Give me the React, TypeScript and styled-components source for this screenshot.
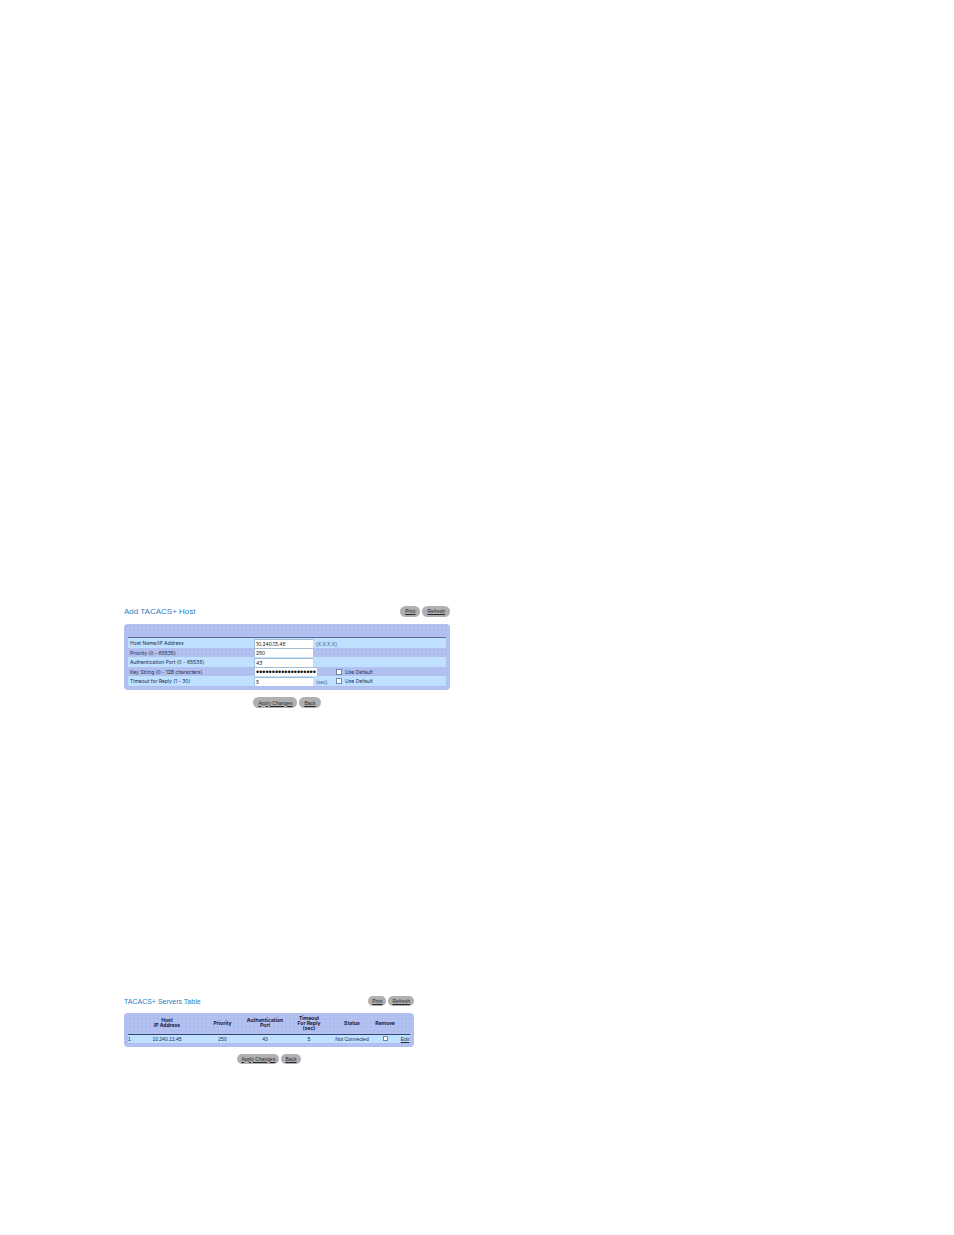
import React from "react";
import styled, { createGlobalStyle } from "styled-components";

const GlobalStyle = createGlobalStyle`
  *, *::before, *::after { box-sizing: border-box; }
  body {
    margin: 0;
    background: #fff;
    color: #1c2c4c;
    font-family: "Liberation Sans", Arial, sans-serif;
    font-size: 5px;
    line-height: 8px;
  }
`;

const Page = styled.main`
  padding: 605px 16px 172px 124px;
`;

const Section = styled.form<{ $width: number; $after?: number }>`
  max-width: ${(p) => p.$width}px;
  margin-bottom: ${(p) => p.$after ?? 0}px;
`;

const TitleBar = styled.header<{ $gap: number }>`
  display: flex;
  align-items: center;
  justify-content: space-between;
  margin-bottom: ${(p) => p.$gap}px;
`;

const Title = styled.h2<{ $size: number }>`
  margin: 0;
  padding-top: 2px;
  color: #2a7cc4;
  font-size: ${(p) => p.$size}px;
  font-weight: 400;
  line-height: 10px;
`;

const Buttons = styled.div<{ $centered?: boolean }>`
  display: flex;
  gap: 2px;
  justify-content: ${(p) => (p.$centered ? "center" : "flex-end")};
`;

const PillButton = styled.button<{ $tall?: boolean }>`
  height: ${(p) => (p.$tall ? 11 : 10)}px;
  padding: 0 ${(p) => (p.$tall ? 5 : 4)}px;
  border: 0;
  border-radius: 6px;
  background: #b0b0b0;
  color: #26262c;
  font: inherit;
  line-height: 10px;
  text-decoration: underline;
`;

const Panel = styled.div<{ $top: number }>`
  margin-bottom: 7px;
  padding: ${(p) => p.$top}px 4px 4px;
  border-radius: 4px;
  background-color: #b3c1f1;
  background-image: radial-gradient(#adbaec 1px, transparent 1px);
  background-size: 4px 4px;
`;

const Fields = styled.div`
  border-top: 1px solid #5a6c9c;
  font-family: Inter, "Liberation Sans", sans-serif;
`;

const Field = styled.div`
  display: grid;
  grid-template-columns: 126px 59px 23px 1fr;
  align-items: center;
  height: 9px;

  &:nth-child(odd) {
    height: 10px;
    background: #bfe0ff;
  }
`;

const FieldLabel = styled.label`
  padding-left: 2px;
`;

const TextBox = styled.input<{ $wide?: boolean }>`
  width: ${(p) => (p.$wide ? 63 : 59)}px;
  height: 9px;
  padding: 0 1px;
  border: 0 solid #a4bcd4;
  border-width: 1px 0 0 1px;
  background: #fff;
  color: #111;
  font: inherit;
  font-family: ${(p) => (p.$wide ? '"Liberation Sans", sans-serif' : "inherit")};
  font-size: ${(p) => (p.$wide ? 9 : 5)}px;
  line-height: 8px;
  outline: 0;
`;

const Hint = styled.span`
  padding: 1px 0 0 3px;
  color: #3c5c8c;
  font-family: "Liberation Sans", sans-serif;
`;

const CheckLabel = styled.label`
  display: flex;
  align-items: center;
  gap: 3px;
`;

const Check = styled.input`
  appearance: none;
  display: block;
  width: 6px;
  height: 6px;
  margin: 0;
  border: 1px solid #7088a8;
  background: #fff;
`;

const Servers = styled.table`
  width: 100%;
  border-collapse: collapse;
  table-layout: fixed;
  text-align: center;
  white-space: nowrap;

  th {
    height: 21px;
    padding: 0;
    border-bottom: 1px solid #34446c;
    color: #16203c;
    font-family: Inter, "Liberation Sans", sans-serif;
    line-height: 5px;
  }

  td {
    height: 8px;
    padding: 0;
    background: #bfe0ff;
  }

  td:first-child { text-align: left; }

  input { margin: 0 auto; width: 5px; height: 5px; }
`;

const EditLink = styled.a`
  color: #1c2c4c;
`;

type FieldSpec = { id: string; label: string; value: string; secret?: boolean; hint?: string; useDefault?: boolean };

const fields: FieldSpec[] = [
  { id: "host", label: "Host Name/IP Address", value: "10.240.13.45", hint: "(X.X.X.X)" },
  { id: "priority", label: "Priority (0 - 65535)", value: "250" },
  { id: "port", label: "Authentication Port (0 - 65535)", value: "43" },
  { id: "key", label: "Key String (0 - 128 characters)", value: "abcdefghijklmnopqrst", secret: true, useDefault: true },
  { id: "timeout", label: "Timeout for Reply (1 - 30)", value: "5", hint: "(sec)", useDefault: true },
];

const columns = [7, 64, 47, 38, 50, 36, 30, 10];

export default function App() {
  return (
    <>
      <GlobalStyle />
      <Page>
        <Section $width={326} $after={287}>
          <TitleBar $gap={7}>
            <Title $size={8}>Add TACACS+ Host</Title>
            <Buttons>
              <PillButton $tall type="button">Print</PillButton>
              <PillButton $tall type="button">Refresh</PillButton>
            </Buttons>
          </TitleBar>
          <Panel $top={13}>
            <Fields>
              {fields.map((f) => (
                <Field key={f.id}>
                  <FieldLabel htmlFor={f.id}>{f.label}</FieldLabel>
                  <TextBox id={f.id} type={f.secret ? "password" : "text"} $wide={f.secret} defaultValue={f.value} />
                  <Hint>{f.hint}</Hint>
                  {f.useDefault && (
                    <CheckLabel>
                      <Check type="checkbox" />
                      Use Default
                    </CheckLabel>
                  )}
                </Field>
              ))}
            </Fields>
          </Panel>
          <Buttons $centered>
            <PillButton $tall type="button">Apply Changes</PillButton>
            <PillButton $tall type="button">Back</PillButton>
          </Buttons>
        </Section>

        <Section $width={290}>
          <TitleBar $gap={6}>
            <Title $size={7}>TACACS+ Servers Table</Title>
            <Buttons>
              <PillButton type="button">Print</PillButton>
              <PillButton type="button">Refresh</PillButton>
            </Buttons>
          </TitleBar>
          <Panel $top={0}>
            <Servers>
              <colgroup>
                {columns.map((w, i) => (
                  <col key={i} width={w} />
                ))}
              </colgroup>
              <thead>
                <tr>
                  <th />
                  <th>Host<br />IP Address</th>
                  <th>Priority</th>
                  <th>Authentication<br />Port</th>
                  <th>Timeout<br />For Reply<br />(sec)</th>
                  <th>Status</th>
                  <th>Remove</th>
                  <th />
                </tr>
              </thead>
              <tbody>
                <tr>
                  <td>1</td>
                  <td>10.240.13.45</td>
                  <td>250</td>
                  <td>43</td>
                  <td>5</td>
                  <td>Not Connected</td>
                  <td><Check type="checkbox" aria-label="Remove server 1" /></td>
                  <td><EditLink href="#edit">Edit</EditLink></td>
                </tr>
              </tbody>
            </Servers>
          </Panel>
          <Buttons $centered>
            <PillButton type="button">Apply Changes</PillButton>
            <PillButton type="button">Back</PillButton>
          </Buttons>
        </Section>
      </Page>
    </>
  );
}
